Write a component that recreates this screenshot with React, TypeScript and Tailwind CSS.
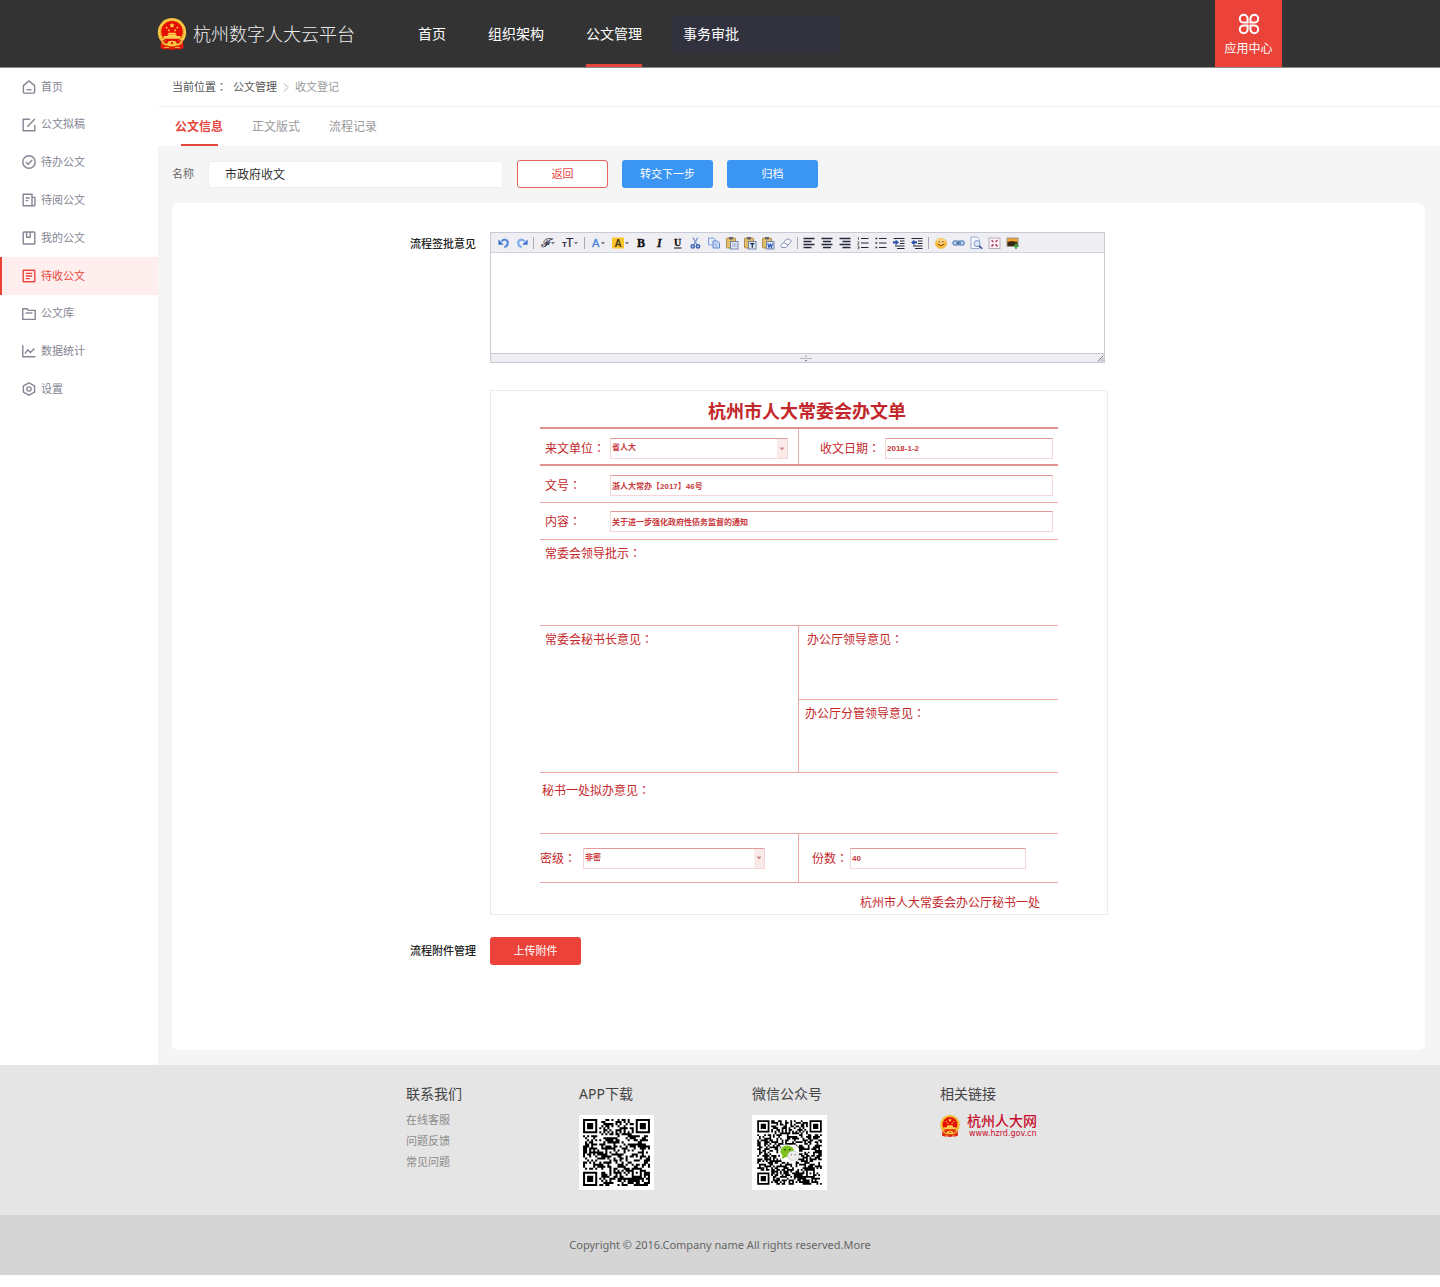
import type { ReactNode } from "react";

const noto = "[font-family:'Noto_Sans','Noto_Sans_CJK_SC',sans-serif]";

function Colon() {
  return <span className="[font-family:'Noto_Sans_CJK_JP',sans-serif]">：</span>;
}

/* ---------- emblem ---------- */

function Star({ x, y, r }: { x: number; y: number; r: number }) {
  const points = Array.from({ length: 10 }, (_, i) => {
    const radius = i % 2 === 0 ? r : r * 0.45;
    const a = (Math.PI / 5) * i - Math.PI / 2;
    return `${x + radius * Math.cos(a)},${y + radius * Math.sin(a)}`;
  }).join(" ");
  return <polygon points={points} fill="#ffd94a" />;
}

function Emblem({ className }: { className: string }) {
  return (
    <svg viewBox="0 0 28 31" className={className} aria-hidden="true">
      <path d="M3.4 21h21.200l.6 8q-3.200 2.200-7 1L14 31l-4.200-1q-3.800 1.200-7-1z" fill="#e01c0c" />
      <circle cx="14" cy="13.8" r="13.8" fill="#eeb02c" />
      <circle cx="14" cy="13.8" r="12.4" fill="none" stroke="#fbd95f" strokeWidth="1.4" strokeDasharray="2 1" />
      <circle cx="14" cy="13.2" r="10.4" fill="#e60f05" />
      <Star x={14} y={7.2} r={2.8} />
      <Star x={8.8} y={9.4} r={1.4} />
      <Star x={11} y={12} r={1.4} />
      <Star x={17} y={12} r={1.4} />
      <Star x={19.2} y={9.4} r={1.4} />
      <path d="M11 14.4h6l1.400 1.400H9.600zM9.800 16h8.400v1.400H9.800zM5.800 17.400h16.400v2.600H5.800z" fill="#fcd04a" />
      <path d="M4.600 21.400q9.400 2.200 18.800 0l-2.600 3q-6.800 2-13.600 0z" fill="#d4160a" />
      <ellipse cx="14" cy="24.400" rx="4.400" ry="2.400" fill="#f8c53c" />
      <circle cx="14" cy="24.400" r="1.100" fill="#e01c0c" />
      <path d="M4.400 24.600l4 1.800M23.600 24.600l-4 1.800M6.600 28.600h4.600M16.800 28.600h4.600" stroke="#f9ae2e" />
    </svg>
  );
}

/* ---------- sidebar ---------- */

const sideIcons: Record<string, ReactNode> = {
  home: <><path d="M1.4 5.600 7 .9l5.600 4.700v6.700a.8.8 0 0 1-.8.8H2.200a.8.8 0 0 1-.8-.8z" /><path d="M4.600 9.700h4.800" /></>,
  draft: <><path d="M8 1.200H1.200v11.600h11.600V7" /><path d="M12.800 1 5.400 8.800" /></>,
  todo: <><circle cx="7" cy="7" r="6.200" /><path d="m4 7 2.200 2.200 4-4.100" /></>,
  read: <><path d="M10 12.800V1.200H1.200v11.600H12a.9.9 0 0 0 .9-.9V4.400H10" /><path d="M3.600 5h4M3.600 7.600h2.600" /></>,
  mine: <><rect x="1.200" y="1" width="11.600" height="12" rx=".8" /><path d="M4.600 1v5.200h3.600V1" /></>,
  receive: <><rect x="1.200" y="1.200" width="11.600" height="11.600" rx=".4" /><path d="M3.800 4.400h6.400M3.800 7h6.400M3.800 9.600h4" /></>,
  store: <><path d="M.8 12.400V1.800h4.400l1.200 1.600h6.800v9z" /><path d="M3.600 6h6.800" /></>,
  stats: <><path d="M.8 1.200v11.600h12.600" /><path d="m3 9.600 2.800-3.800 2.600 2.800 4-4.200" /></>,
  settings: <><path d="m7 .8 5.600 3.100v6.200L7 13.200l-5.600-3.100V3.900z" /><circle cx="7" cy="7" r="2.100" /></>,
};

const sideItems = [
  { key: "home", label: "首页" },
  { key: "draft", label: "公文拟稿" },
  { key: "todo", label: "待办公文" },
  { key: "read", label: "待阅公文" },
  { key: "mine", label: "我的公文" },
  { key: "receive", label: "待收公文", active: true },
  { key: "store", label: "公文库" },
  { key: "stats", label: "数据统计" },
  { key: "settings", label: "设置" },
];

function Sidebar() {
  return (
    <aside className="w-[158px] shrink-0 bg-white">
      <nav className="grid h-[340px] auto-rows-fr">
        {sideItems.map((item) => (
          <a
            key={item.key}
            href="#"
            className={
              item.active
                ? "flex items-center gap-[5px] border-l-2 border-[#eb4339] bg-[#feeeed] pl-5 text-[11px] text-[#e5473f]"
                : "flex items-center gap-[5px] border-l-2 border-transparent pl-5 text-[11px] text-[#858593]"
            }
          >
            <svg viewBox="0 0 14 14" className="size-[14px]" fill="none" stroke="currentColor" strokeWidth="1.4" aria-hidden="true">
              {sideIcons[item.key]}
            </svg>
            {item.label}
          </a>
        ))}
      </nav>
    </aside>
  );
}

/* ---------- editor ---------- */

const caret = <path d="M0 0h4L2 2.4z" fill="#777" />;

function Clipboard({ children }: { children?: ReactNode }) {
  return (
    <>
      <rect x="1.5" y="2" width="9" height="10" rx="1" fill="#e3bd68" stroke="#9c7c3a" strokeWidth=".8" />
      <rect x="4" y="1" width="4" height="2.4" rx=".6" fill="#666" />
      <rect x="5.5" y="5.5" width="7.5" height="7.5" fill="#dfe8f8" stroke="#5a6f9c" strokeWidth=".8" />
      {children}
    </>
  );
}

const dark = "#26263a";
type Tool = { name: string; icon: ReactNode; wide?: boolean };
const serif = "Liberation Serif, serif";
const sans = "Liberation Sans, sans-serif";

const toolGroups: Tool[][] = [
  [
    { name: "撤销", icon: <><path d="M4.500 5.600C6 2.600 11 3.200 10.800 7c-.1 2.200-1.600 3.600-3.400 4.200" fill="none" stroke="#5b8add" strokeWidth="2.200" /><path d="M1.400 3.400v5.400h5.400z" fill="#3f70cc" /></> },
    { name: "重做", icon: <><path d="M9.500 5.600C8 2.600 3 3.200 3.200 7c.1 2.200 1.600 3.600 3.400 4.200" fill="none" stroke="#7cacec" strokeWidth="2.200" /><path d="M12.600 3.400v5.400H7.200z" fill="#3f70cc" /></> },
  ],
  [
    { name: "字体", wide: true, icon: <><text x="3" y="11" fontSize="12" fontStyle="italic" fontFamily={serif} fill={dark} stroke={dark} strokeWidth=".2">ℱ</text><g transform="translate(13 6)">{caret}</g></> },
    { name: "字号", wide: true, icon: <><text x="1" y="11" fontSize="8" fontWeight="bold" fontFamily={sans} fill={dark}>T</text><text x="5" y="11" fontSize="12" fontFamily={sans} fill={dark} stroke={dark} strokeWidth=".2">T</text><g transform="translate(13 6)">{caret}</g></> },
  ],
  [
    { name: "文字颜色", wide: true, icon: <><text x="3" y="11" fontSize="11" fontFamily={sans} fill="#4a86dd" stroke="#4a86dd" strokeWidth=".4">A</text><g transform="translate(12 6)">{caret}</g></> },
    { name: "背景颜色", wide: true, icon: <><rect x="0" y="1.500" width="12" height="11" rx="1" fill="#fbc62c" /><text x="2.400" y="10.500" fontSize="10" fontWeight="bold" fontFamily={sans} fill="#4a3c1a">A</text><g transform="translate(13 6)">{caret}</g></> },
    { name: "粗体", icon: <text x="2" y="11" fontSize="12" fontWeight="bold" fontFamily={serif} fill="#111" stroke="#111" strokeWidth=".4">B</text> },
    { name: "斜体", icon: <text x="4" y="11" fontSize="12" fontWeight="bold" fontStyle="italic" fontFamily={serif} fill="#111" stroke="#111" strokeWidth=".3">I</text> },
    { name: "下划线", icon: <><text x="3" y="10" fontSize="10" fontWeight="bold" fontFamily={serif} fill="#111" stroke="#111" strokeWidth=".3">U</text><path d="M3 12h7.500" stroke="#111" /></> },
    { name: "剪切", icon: <><path d="M4 1.500 8 9M8.800 1.500 4.800 9" stroke="#7a94cb" strokeWidth="1.300" /><circle cx="3.800" cy="10.400" r="1.600" fill="none" stroke="#3f63b5" strokeWidth="1.600" /><circle cx="9" cy="10.400" r="1.600" fill="none" stroke="#3f63b5" strokeWidth="1.600" /></> },
    { name: "复制", icon: <><path d="M1.500 2h5L8 3.500V9H1.500z" fill="#dfe9fb" stroke="#7f9fdc" /><path d="M6 5h4.500l2 2v5H6z" fill="#cfdefa" stroke="#6288cf" /><path d="M7.500 8h3M7.500 10h3" stroke="#8ba8dd" /></> },
    { name: "粘贴", icon: <Clipboard><path d="M7 8h4.500M7 10h4.500" stroke="#8598c0" strokeWidth=".8" /></Clipboard> },
    { name: "粘贴为文本", icon: <Clipboard><path d="M7.200 7.600h4.200M9.300 7.600v4.200" stroke="#1d2440" strokeWidth="1.200" /></Clipboard> },
    { name: "从 Word 粘贴", icon: <Clipboard><path d="m6.800 7.400 1.200 4 1.200-3 1.200 3 1.200-4" fill="none" stroke="#2f5bb8" strokeWidth="1.200" /></Clipboard> },
    { name: "清除格式", icon: <path d="m1.800 9.500 5.800-6.300q.6-.5 1.300-.2l2.900 1.400q.7.500.2 1.200L6.800 11.500H3q-1.600-.6-1.200-2zM4.600 6.600 9.200 9" fill="#fff" stroke="#8090b4" /> },
  ],
  [
    { name: "左对齐", icon: <path d="M1.500 2.500h11M1.500 5.500h8M1.500 8.500h11M1.500 11.500h8" stroke={dark} strokeWidth="1.400" /> },
    { name: "居中", icon: <path d="M1.500 2.500h11M3 5.500h8M1.500 8.500h11M3 11.500h8" stroke={dark} strokeWidth="1.400" /> },
    { name: "右对齐", icon: <path d="M1.500 2.500h11M4.500 5.500h8M1.500 8.500h11M4.500 11.500h8" stroke={dark} strokeWidth="1.400" /> },
    { name: "编号", icon: <><path d="M5 2.500h7.500M5 7h7.500M5 11.500h7.500" stroke={dark} strokeWidth="1.200" /><path d="M2.500 1v3M1.500 5.800H3v1L1.500 8.200h1.800M1.500 10H3v2.800H1.500M2 11.400h1" fill="none" stroke="#555" strokeWidth=".8" /></> },
    { name: "项目符号", icon: <><path d="M5 2.500h7.500M5 7h7.500M5 11.500h7.500" stroke={dark} strokeWidth="1.200" /><path d="M1.500 2.500h1.700M1.500 7h1.700M1.500 11.500h1.700" stroke={dark} strokeWidth="1.700" /></> },
    { name: "增加缩进", icon: <><path d="M1.500 2.500h11M8 5h4.500M8 7.500h4.500M3 10h9.500M5 12.500h7.500" stroke={dark} strokeWidth="1.100" /><path d="M1 5.300h2.600V3.600L7 6.400 3.600 9.200V7.500H1z" fill="#2f4fa8" /></> },
    { name: "减少缩进", icon: <><path d="M1.500 2.500h11M8 5h4.500M8 7.500h4.500M3 10h9.500M5 12.500h7.500" stroke={dark} strokeWidth="1.100" /><path d="M7 5.300H4.400V3.600L1 6.400l3.400 2.800V7.500H7z" fill="#2f4fa8" /></> },
  ],
  [
    { name: "表情", icon: <><ellipse cx="8" cy="7.400" rx="5.600" ry="5" fill="#fbbd3c" stroke="#eda93a" strokeWidth=".6" /><ellipse cx="8" cy="5.400" rx="4" ry="2.400" fill="#fdda86" /><path d="M4.800 8.200q3.200 3 6.400 0" fill="none" stroke="#8a4b10" /><circle cx="6.400" cy="5.800" r=".8" fill="#6b3d0c" /><circle cx="9.800" cy="5.800" r=".8" fill="#6b3d0c" /></> },
    { name: "链接", icon: <><rect x="2" y="5" width="6" height="4" rx="2" fill="#c6d8f2" stroke="#6b91c9" strokeWidth="1.400" /><rect x="7.200" y="5" width="6" height="4" rx="2" fill="#c6d8f2" stroke="#6b91c9" strokeWidth="1.400" /><path d="M5 7h5" stroke="#3a5688" strokeWidth="1.200" /></> },
    { name: "预览", icon: <><path d="M2 1h6l2.500 2.500v9H2z" fill="#f6f9ff" stroke="#8da2cc" strokeWidth=".9" /><circle cx="8" cy="7.600" r="3" fill="#dbe9fb" stroke="#7d98c8" /><path d="m10.200 9.800 3 3" stroke="#39477a" strokeWidth="1.500" /></> },
    { name: "全屏", icon: <><rect x="2" y="2" width="11" height="10.500" fill="#fbf4f6" stroke="#b8acb6" /><path d="M4.500 4.200 6.500 6M4.500 10.400l2-2M10.500 4.200l-2 1.800M10.500 10.400l-2-2" stroke="#b03a5b" strokeWidth="1.500" /></> },
    { name: "图片", icon: <><rect x="2" y="2" width="11" height="8.500" fill="#f0a52d" stroke="#8a8a96" strokeWidth=".8" /><path d="M2.500 6l4-1 6 1v4h-10z" fill="#3a2516" /><path d="M11 7.500v5.500M8.400 10.200h5.200" stroke="#3da345" strokeWidth="1.800" /></> },
  ],
];

function Editor() {
  return (
    <div className="w-full max-w-[615px] border border-[#c9c9d4] bg-white">
      <div role="toolbar" aria-label="编辑工具" className="flex h-[20px] items-center overflow-hidden border-b border-[#d2d2dc] bg-[#efeff3] pl-1">
        {toolGroups.map((group, g) => (
          <div key={g} className="flex items-center">
            {g > 0 && <span className="mx-[2px] h-3 w-px bg-[#a9a9b5]" />}
            {group.map((tool) => (
              <button
                key={tool.name}
                type="button"
                aria-label={tool.name}
                className={tool.wide ? "flex w-[23px] justify-center" : "flex w-[18px] justify-center"}
              >
                <svg viewBox={tool.wide ? "0 0 20 14" : "0 0 14 14"} className={tool.wide ? "h-[14px] w-5" : "size-[14px]"} aria-hidden="true">
                  {tool.icon}
                </svg>
              </button>
            ))}
          </div>
        ))}
      </div>
      <textarea id="opinion" className="block h-[100px] w-full resize-none bg-white p-2 text-xs outline-none" />
      <div className="flex h-[9px] items-center border-t border-[#c9c9d4] bg-[#efeff3] pl-4">
        <span className="flex-1" />
        <svg viewBox="0 0 12 7" className="h-[7px] w-3" aria-hidden="true">
          <path d="M0 3.500h12" stroke="#b5b5c2" />
          <path d="M5 1.600 6 .4l1 1.200zM4.800 5 6 6.600 7.200 5z" fill="#555566" />
        </svg>
        <span className="flex flex-1 justify-end">
          <svg viewBox="0 0 7 7" className="size-[7px]" stroke="#70707c" strokeWidth=".8" aria-hidden="true">
            <path d="M.5 6.500l6-6M3 6.500 6.500 3M5.300 6.500l1.200-1.200" />
          </svg>
        </span>
      </div>
    </div>
  );
}

/* ---------- document sheet ---------- */

const fieldBox =
  "h-[21px] min-w-0 flex-1 appearance-none rounded-none border border-[#f4d6d6] border-t-[#e39a9a] bg-white pl-px text-[8px] font-bold text-[#c9383c] outline-none [font-family:'Liberation_Sans','Noto_Sans_CJK_SC',sans-serif]";

function Field({ id, label, value, width }: { id: string; label: string; value: string; width: string }) {
  return (
    <>
      <label htmlFor={id} className={`${width} shrink-0 leading-[21px]`}>
        {label}
        <Colon />
      </label>
      <input id={id} defaultValue={value} className={fieldBox} />
    </>
  );
}

function SelectField({ id, label, value, width }: { id: string; label: string; value: string; width: string }) {
  return (
    <>
      <label htmlFor={id} className={`${width} shrink-0 leading-[21px]`}>
        {label}
        <Colon />
      </label>
      <div className="relative flex flex-1">
        <select id={id} defaultValue={value} className={fieldBox}>
          <option>{value}</option>
        </select>
        <span className="pointer-events-none absolute top-px right-px bottom-px flex w-[10px] items-center justify-center bg-[#fbeaea]">
          <svg viewBox="0 0 6 4" className="h-1 w-[6px]" aria-hidden="true">
            <path d="M.5.5h5L3 3.500z" fill="#cf8585" />
          </svg>
        </span>
      </div>
    </>
  );
}

function Note({ children }: { children: ReactNode }) {
  return (
    <p className="leading-[18px]">
      {children}
      <Colon />
    </p>
  );
}

function Sheet() {
  return (
    <div className="w-full max-w-[618px] border border-[#ececec] pr-[49px] pl-[49px] text-xs text-[#c3272b]">
      <h2 className="ml-4 pt-[7px] pb-[3px] text-center text-lg leading-[26px] font-bold">杭州市人大常委会办文单</h2>
      <div className="flex h-[37px] border-t-2 border-[#e39090]">
        <div className="flex w-1/2 items-end border-r border-[#eeb0b0] pr-[10px] pb-[5px] pl-[5px]">
          <SelectField id="from" label="来文单位" value="省人大" width="w-[65px]" />
        </div>
        <div className="flex w-1/2 items-end pr-[5px] pb-[5px] pl-[21px]">
          <Field id="date" label="收文日期" value="2018-1-2" width="w-[65px]" />
        </div>
      </div>
      <div className="flex h-[38px] items-end border-t-2 border-[#e39090] pr-[5px] pb-[6px] pl-[5px]">
        <Field id="number" label="文号" value="浙人大常办【2017】46号" width="w-[65px]" />
      </div>
      <div className="flex h-[37px] items-end border-t border-[#eba6a6] pr-[5px] pb-[7px] pl-[5px]">
        <Field id="content" label="内容" value="关于进一步强化政府性债务监督的通知" width="w-[65px]" />
      </div>
      <div className="h-[86px] border-t border-[#eba6a6] pt-1 pl-[5px]">
        <Note>常委会领导批示</Note>
      </div>
      <div className="flex h-[147px] border-t border-[#eba6a6]">
        <div className="w-1/2 border-r border-[#eba6a6] pt-1 pl-[5px]">
          <Note>常委会秘书长意见</Note>
        </div>
        <div className="flex w-1/2 flex-col">
          <div className="flex-1 pt-1 pl-2">
            <Note>办公厅领导意见</Note>
          </div>
          <div className="flex-1 border-t border-[#eba6a6] pt-1 pl-[6px]">
            <Note>办公厅分管领导意见</Note>
          </div>
        </div>
      </div>
      <div className="h-[61px] border-t border-[#eba6a6] pt-2 pl-[2px]">
        <Note>秘书一处拟办意见</Note>
      </div>
      <div className="flex h-[50px] border-y border-[#eba6a6]">
        <div className="flex w-1/2 items-center border-r border-[#eba6a6] pr-[33px]">
          <SelectField id="secrecy" label="密级" value="非密" width="w-[43px]" />
        </div>
        <div className="flex w-1/2 items-center pr-8 pl-[13px]">
          <Field id="copies" label="份数" value="40" width="w-[38px]" />
        </div>
      </div>
      <p className="pt-[11px] pr-[18px] pb-[2px] text-right leading-[18px]">杭州市人大常委会办公厅秘书一处</p>
    </div>
  );
}

/* ---------- QR codes ---------- */

function QrCode({ size, seed, pad, title, children }: { size: number; seed: number; pad: number; title: string; children?: ReactNode }) {
  const ring = (r: number, c: number, r0: number, c0: number, half: number) => {
    const d = Math.max(Math.abs(r - r0), Math.abs(c - c0));
    if (d > half + 1) return null;
    if (half === 3) return d === 3 || d <= 1;
    return d > half ? null : d === 2 || d === 0;
  };
  let state = seed;
  let path = "";
  for (let r = 0; r < size; r++) {
    for (let c = 0; c < size; c++) {
      state = (Math.imul(state, 1664525) + 1013904223) >>> 0;
      const fixed =
        ring(r, c, 3, 3, 3) ??
        ring(r, c, 3, size - 4, 3) ??
        ring(r, c, size - 4, 3, 3) ??
        ring(r, c, size - 7, size - 7, 2);
      const timing = r === 6 || c === 6 ? (r + c) % 2 === 0 : null;
      if (fixed ?? timing ?? (state >>> 16) % 100 < 53) path += `M${c} ${r}h1v1h-1z`;
    }
  }
  const total = size + pad * 2;
  return (
    <svg role="img" aria-label={title} viewBox={`${-pad} ${-pad} ${total} ${total}`} className="size-[75px] bg-white">
      <path d={path} fill="#000" />
      {children}
    </svg>
  );
}

function Footer() {
  return (
    <footer>
      <div className="flex h-[150px] bg-[#e5e5e5] pt-[18px] pl-[406px] text-sm leading-[22px] text-[#444]">
        <div className="w-[173px]">
          <h3>联系我们</h3>
          <ul className="mt-1 text-[11px] leading-[21px] text-[#8a8a8a]">
            <li><a href="#">在线客服</a></li>
            <li><a href="#">问题反馈</a></li>
            <li><a href="#">常见问题</a></li>
          </ul>
        </div>
        <div className="w-[173px]">
          <h3 className="mb-[10px]">APP下载</h3>
          <QrCode size={33} seed={20161} pad={2} title="APP下载" />
        </div>
        <div className="w-[188px]">
          <h3 className="mb-[10px]">微信公众号</h3>
          <QrCode size={37} seed={7755} pad={3} title="微信公众号">
            <rect x="13" y="14" width="11" height="10" rx="3" fill="#fff" />
            <ellipse cx="17.200" cy="17.800" rx="3.900" ry="3.300" fill="#7cc11d" />
            <path d="m14.600 19.800-.6 2.400 2.800-1.200z" fill="#7cc11d" />
            <circle cx="16" cy="16.800" r=".5" fill="#27470a" />
            <circle cx="18.600" cy="16.800" r=".5" fill="#27470a" />
            <ellipse cx="20.600" cy="20.400" rx="3.200" ry="2.700" fill="#ededed" stroke="#c9c9c9" strokeWidth=".4" />
            <circle cx="19.500" cy="19.800" r=".4" fill="#777" />
            <circle cx="21.700" cy="19.800" r=".4" fill="#777" />
          </QrCode>
        </div>
        <div>
          <h3>相关链接</h3>
          <a href="#" className="mt-[8px] flex items-center gap-[7px] text-[#c8102e]">
            <Emblem className="h-[22px] w-5" />
            <span>
              <span className="block text-sm leading-4 font-medium">杭州人大网</span>
              <span className="block pl-[2px] text-[8px] leading-[10px] [font-family:'DejaVu_Sans',sans-serif]">www.hzrd.gov.cn</span>
            </span>
          </a>
        </div>
      </div>
      <p className="bg-[#d5d5d5] py-5 text-center text-[11px] leading-5 text-[#666]">
        Copyright © 2016.Company name All rights reserved.More
      </p>
    </footer>
  );
}

/* ---------- page ---------- */

function Header() {
  return (
    <header className="flex h-[68px] border-b border-[#8c8c8c] bg-[#333] text-sm text-white">
      <a href="#" className="ml-[157px] flex items-center gap-[6px]">
        <Emblem className="h-[32px] w-[30px]" />
        <span className="text-lg font-light text-[#eee]">杭州数字人大云平台</span>
      </a>
      <nav className="ml-[63px] flex gap-[42px]">
        <a href="#" className="flex items-center">首页</a>
        <a href="#" className="flex items-center">组织架构</a>
        <a href="#" className="flex items-center border-y-[3px] border-t-transparent border-b-[#e5473f]">公文管理</a>
      </nav>
      <a href="#" className="mt-4 ml-[30px] flex h-[36px] w-[168px] items-center bg-[#32323f] pl-[11px]">事务审批</a>
      <button type="button" className="mr-[158px] ml-auto flex w-[67px] flex-col items-center bg-[#eb4339] pt-[13px] text-xs leading-[18px]">
        <svg viewBox="0 0 22 22" className="mb-[5px] size-[22px]" fill="none" stroke="#fff" strokeWidth="2" aria-hidden="true">
          <path d="M9.600 9.600H5.700A3.900 3.900 0 1 1 9.600 5.700zM12.400 9.600V5.700a3.900 3.900 0 1 1 3.900 3.900zM9.600 12.400v3.900a3.900 3.900 0 1 1-3.900-3.900zM12.400 12.400h3.900a3.900 3.900 0 1 1-3.900 3.900z" />
        </svg>
        应用中心
      </button>
    </header>
  );
}

export default function App() {
  return (
    <div className={`bg-white ${noto}`}>
      <Header />
      <div className="flex">
        <Sidebar />
        <main className="min-w-0 flex-1 bg-[#f5f5f5]">
          <div className="flex h-[39px] items-center border-b border-[#f0f0f0] bg-white pl-[14px] text-[11px] text-[#555]">
            <span>当前位置<Colon /></span>
            <a href="#" className="ml-[6px]">公文管理</a>
            <svg viewBox="0 0 6 9" className="mx-[6px] h-[9px] w-[6px]" fill="none" stroke="#aaa" aria-hidden="true">
              <path d="m1 .5 4 4-4 4" />
            </svg>
            <span className="text-[#999]">收文登记</span>
          </div>
          <div role="tablist" className="flex h-[39px] gap-[29px] bg-white pl-[17px] text-xs text-[#999]">
            <button type="button" role="tab" aria-selected="true" className="flex flex-col items-center font-bold text-[#e5473f]">
              <span className="flex flex-1 items-center pt-[2px]">公文信息</span>
              <span className="h-[2px] w-[37px] bg-[#e5473f]" />
            </button>
            <button type="button" role="tab" aria-selected="false">正文版式</button>
            <button type="button" role="tab" aria-selected="false">流程记录</button>
          </div>
          <div className="pt-[14px] pr-[15px] pb-[15px] pl-[14px]">
            <div className="flex items-center gap-[14px] text-[11px]">
              <label htmlFor="title" className="text-[#666]">名称</label>
              <input id="title" defaultValue="市政府收文" className="h-[27px] w-[295px] rounded-[3px] border border-[#eeeeee] bg-white px-4 text-xs text-[#333] outline-none" />
              <button type="button" className="h-7 w-[91px] rounded-[3px] border border-[#e5655e] bg-white text-[#e5473f]">返回</button>
              <button type="button" className="h-7 w-[91px] rounded-[3px] bg-[#3b95f2] text-white">转交下一步</button>
              <button type="button" className="h-7 w-[91px] rounded-[3px] bg-[#3b95f2] text-white">归档</button>
            </div>
            <section className="mt-[15px] flex flex-col rounded-md bg-white pt-[29px] pb-[85px]">
              <div className="flex gap-[14px]">
                <label htmlFor="opinion" className="w-[304px] shrink-0 text-right text-[11px] leading-6 font-medium text-[#222]">流程签批意见</label>
                <Editor />
              </div>
              <div className="mt-[27px] flex pl-[318px]">
                <Sheet />
              </div>
              <div className="mt-[22px] flex items-center gap-[14px] text-[11px]">
                <span id="files" className="w-[304px] shrink-0 text-right font-medium text-[#222]">流程附件管理</span>
                <button type="button" aria-describedby="files" className="h-7 w-[91px] rounded-[3px] bg-[#eb4339] text-white">上传附件</button>
              </div>
            </section>
          </div>
        </main>
      </div>
      <Footer />
    </div>
  );
}
